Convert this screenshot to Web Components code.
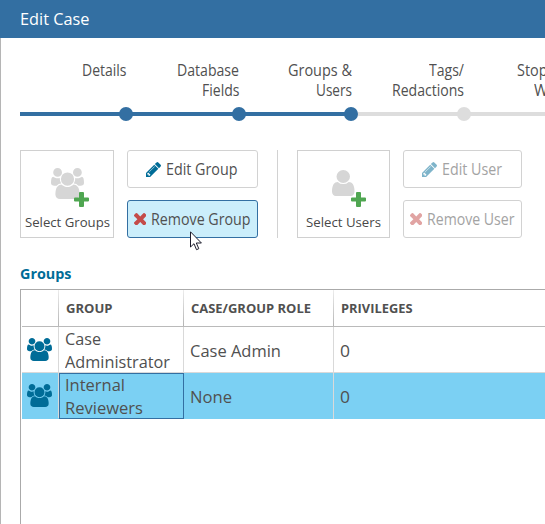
<!DOCTYPE html>
<html lang="en"><head><meta charset="utf-8"><title>Edit Case</title>
<style>
html,body{margin:0;height:524px;overflow:hidden;background:#fff}
body{font-family:"Open Sans","Noto Sans",sans-serif;color:#505050}
</style></head><body>
<case-editor></case-editor>
<script>
const make = (name, html, setup) => customElements.define(name, class extends HTMLElement {
  connectedCallback() {
    if (this.shadowRoot) return;
    const root = this.attachShadow({mode: 'open'});
    const t = document.createElement('template');
    t.innerHTML = html;
    root.append(t.content.cloneNode(true));
    if (setup) setup(this, root);
  }
});

const icons = {
  users: ['0 0 1920 1792', 'M593 896q-162 5-265 128h-134q-82 0-138-40.500t-56-118.500q0-353 124-353 6 0 43.500 21t97.500 42.500 119 21.500q67 0 133-23-5 37-5 66 0 139 81 256zM1664 1533q0 120-73 189.500t-194 69.500h-874q-121 0-194-69.500t-73-189.500q0-53 3.500-103.500t14-109 26.500-108.500 43-97.500 62-81 85.500-53.500 111.500-20q10 0 43 21.500t73 48 107 48 135 21.500 135-21.500 107-48 73-48 43-21.500q61 0 111.500 20t85.500 53.500 62 81 43 97.500 26.500 108.500 14 109 3.500 103.500zM640 256q0 106-75 181t-181 75-181-75-75-181 75-181 181-75 181 75 75 181zM1344 640q0 159-112.500 271.500t-271.500 112.500-271.500-112.500-112.500-271.500 112.500-271.500 271.500-112.500 271.500 112.500 112.500 271.500zM1920 865q0 78-56 118.500t-138 40.500h-134q-103-123-265-128 81-117 81-256 0-29-5-66 66 23 133 23 59 0 119-21.500t97.500-42.500 43.500-21q124 0 124 353zM1792 256q0 106-75 181t-181 75-181-75-75-181 75-181 181-75 181 75 75 181z'],
  user: ['256 128 1280 1536', 'M1536 1399q0 109-62.500 187t-150.500 78h-854q-88 0-150.500-78t-62.500-187q0-85 8.500-160.500t31.500-152 58.500-131 94-89 134.500-34.500q131 128 313 128t313-128q76 0 134.500 34.500t94 89 58.500 131 31.500 152 8.500 160.500zM1280 512q0 159-112.500 271.500t-271.500 112.500-271.500-112.500-112.500-271.500 112.500-271.500 271.500-112.500 271.500 112.500 112.500 271.500z'],
  pencil: ['128 149 1515 1515', 'M491 1536l91-91-235-235-91 91v107h128v128h107zM1014 608q0-22-22-22-10 0-17 7l-542 542q-7 7-7 17 0 22 22 22 10 0 17-7l542-542q7-7 7-17zM960 416l416 416-832 832h-416v-416zM1643 512q0 53-37 90l-166 166-416-416 166-165q36-38 90-38 53 0 91 38l235 234q37 39 37 91z'],
  cross: ['302 366 1188 1188', 'M1490 1322q0 40-28 68l-136 136q-28 28-68 28t-68-28l-294-294-294 294q-28 28-68 28t-68-28l-136-136q-28-28-28-68t28-68l294-294-294-294q-28-28-28-68t28-68l136-136q28-28 68-28t68 28l294 294 294-294q28-28 68-28t68 28l136 136q28 28 28 68t-28 68l-294 294 294 294q28 28 28 68z'],
  plus: ['0 0 15 15', 'M6 0h3q1 0 1 1v4.500h4q1 0 1 1v2q0 1-1 1h-4v4.500q0 1-1 1h-3q-1 0-1-1v-4.500h-4q-1 0-1-1v-2q0-1 1-1h4v-4.500q0-1 1-1z']
};

// One line of text, condensed or widened to take up the width given in "w".
make('fit-text', `<style>:host{display:block;white-space:nowrap}span{display:inline-block;transform-origin:0 50%}</style><span><slot></slot></span>`, (el, root) => {
  const w = parseFloat(el.getAttribute('w')), span = root.querySelector('span');
  el.style.width = w + 'px';
  span.style.transform = `scaleX(${(w / span.getBoundingClientRect().width).toFixed(4)})`;
});

make('ui-icon', `<style>:host{display:block;flex:none;line-height:0}svg{display:block;width:100%;height:100%}</style><svg preserveAspectRatio="none"><path fill="currentColor"/></svg>`, (el, root) => {
  const [box, d] = icons[el.getAttribute('name')];
  root.querySelector('svg').setAttribute('viewBox', box);
  root.querySelector('path').setAttribute('d', d);
});

make('title-bar', `<style>:host{display:block;height:38px;box-sizing:border-box;padding-left:20px;background:#336fa2;color:#fff;font-size:16.500px;line-height:38px}</style><slot></slot>`);

make('wizard-step', `<style>
:host{display:flex;flex-direction:column;flex:none;width:112.670px;height:62px}
.label{height:48px;font-size:15.500px;line-height:20px;display:flex;flex-direction:column;align-items:flex-end;margin-right:-.500px;padding-top:.500px;box-sizing:border-box}
:host([cut]) .label{align-items:flex-start;padding-left:53px}
.mark{height:14px;display:grid;grid-template-columns:1fr;align-items:center}
.mark i{grid-area:1/1;height:4px;background:#336fa2;margin-right:-1px}
.mark b{grid-area:1/1;justify-self:end;width:14px;height:14px;border-radius:50%;background:#336fa2;margin-right:-7px;z-index:1}
:host([first]) .mark i{margin-left:6.700px}
:host([todo]) i,:host([todo]) b{background:#ddd}
:host([cut]) b{visibility:hidden}
</style><div class="label"><slot></slot></div><div class="mark"><i></i><b></b></div>`);

make('wizard-steps', `<style>:host{display:flex;padding:21px 0 0 13.300px;height:62px;overflow:hidden}</style><slot></slot>`);

make('pick-tile', `<style>
:host{display:flex;flex-direction:column;align-items:center;box-sizing:border-box;width:94px;height:88px;border:1px solid #d0d0d0;font-size:13px;line-height:20px;color:#484848}
.art{height:61px;position:relative;display:flex;align-items:flex-start;justify-content:center;width:100%}
.main{color:#d6d6d6;width:33px;height:31px;margin-top:16.500px}
:host([kind=user]) .main{width:22.500px;height:26px;margin-top:19px}
.plus{position:absolute;left:53px;top:41px;width:15px;height:15px;color:#4fa651}
</style><div class="art"></div><slot></slot>`, (el, root) => {
  const icon = document.createElement('ui-icon');
  icon.className = 'main';
  icon.setAttribute('name', el.getAttribute('kind'));
  const plus = document.createElement('ui-icon');
  plus.className = 'plus';
  plus.setAttribute('name', 'plus');
  root.querySelector('.art').append(icon, plus);
});

make('action-button', `<style>
:host{display:flex;align-items:center;box-sizing:border-box;width:131px;height:38px;border:1px solid #d2d2d2;border-radius:3px;font-size:15.500px;line-height:36px;background:#fff}
:host([active]){background:#cbeefb;border-color:#336fa2}
:host([disabled]){color:#a3a3a3}
</style><slot></slot>`);

make('mouse-pointer', `<style>:host{position:absolute;left:190px;top:231px;width:13px;height:20px}svg{display:block}</style>
<svg width="13" height="20" viewBox="0 0 13 20"><path d="M.5.800v15.200l3.500-3.300 2.500 6 2.300-1-2.500-5.700h5.100z" fill="#fff" stroke="#1c1c2c" stroke-width="1"/></svg>`);

make('grid-cell', `<style>
:host{display:flex;flex-direction:column;justify-content:center;box-sizing:border-box;height:46px;border-right:1px solid #d9d9d9;padding-left:6px;font-size:16.500px;line-height:23px}
:host([last]){border-right:0}
:host([head]){height:36px;font-size:12.500px;font-weight:700;line-height:37px;border-image:linear-gradient(#eee,#b3b3b3) 1;padding-left:7px}
:host([pic]){padding-left:5px;color:#006c97;height:45px}
:host([focus]){outline:1px solid #336fa2;outline-offset:-1px;border-right-color:#336fa2}
</style><slot></slot>`);
make('grid-row', `<style>
:host{display:grid;grid-template-columns:37px 125px 150px 1fr;box-sizing:border-box;height:46px;border-bottom:1px solid #d9d9d9}
:host([head]){height:37px;border-color:#bababa}
:host([selected]){background:#7bd0f3;border:0}
</style><slot></slot>`);
make('data-grid', `<style>:host{display:block;box-sizing:border-box;margin-left:20px;height:235px;border:solid #aaa;border-width:1px 0 0 1px;padding-left:1px}</style><slot></slot>`);

make('case-editor', `<style>
:host{display:block;position:relative;width:545px;height:524px;overflow:hidden}
main{height:486px;border-left:1px solid #b5b5b5;box-sizing:border-box}
.body{margin-left:-1px}
.tools{display:flex;padding:29px 0 0 20px}
.stack{display:flex;flex-direction:column;gap:12px;margin-left:13px}
.sep{width:1px;height:88px;background:#d2d2d2;margin:0 19px}
.users{width:93px}
.narrow{width:119px}
h2{margin:0;height:51px;box-sizing:border-box;padding:25px 0 0 20px;font-size:15px;line-height:20px;font-weight:700;color:#006c97}
.p{width:15px;height:15px;color:#006c97;margin:0 4.500px 0 18px}
.x{width:12.500px;height:12.500px;color:#c44b49;margin:0 5px 0 5.500px}
.dim{opacity:.5}
.g{width:25px;height:23px}
</style>
<title-bar><fit-text w="69.500">Edit Case</fit-text></title-bar>
<main><div class="body">
<wizard-steps>
<wizard-step first><fit-text w="44.500">Details</fit-text></wizard-step>
<wizard-step><fit-text w="62">Database</fit-text><fit-text w="37.500">Fields</fit-text></wizard-step>
<wizard-step><fit-text w="64">Groups &amp;</fit-text><fit-text w="36">Users</fit-text></wizard-step>
<wizard-step todo><fit-text w="35">Tags/</fit-text><fit-text w="72">Redactions</fit-text></wizard-step>
<wizard-step todo cut><fit-text w="30.500">Stop</fit-text><fit-text w="14" style="padding-left:17px">W</fit-text></wizard-step>
</wizard-steps>
<div class="tools">
<pick-tile kind="users"><fit-text w="85">Select Groups</fit-text></pick-tile>
<div class="stack">
<action-button><ui-icon class="p" name="pencil"></ui-icon><fit-text w="71.500">Edit Group</fit-text></action-button>
<action-button active><ui-icon class="x" name="cross"></ui-icon><fit-text w="99.500">Remove Group</fit-text></action-button>
</div>
<div class="sep"></div>
<pick-tile kind="user" class="users"><fit-text w="75">Select Users</fit-text></pick-tile>
<div class="stack">
<action-button disabled class="narrow"><ui-icon class="p dim" name="pencil"></ui-icon><fit-text w="60">Edit User</fit-text></action-button>
<action-button disabled class="narrow"><ui-icon class="x dim" name="cross"></ui-icon><fit-text w="87.500">Remove User</fit-text></action-button>
</div>
</div>
<h2><fit-text w="51.500">Groups</fit-text></h2>
<data-grid>
<grid-row head><grid-cell head></grid-cell><grid-cell head><fit-text w="46.500">GROUP</fit-text></grid-cell><grid-cell head><fit-text w="120">CASE/GROUP ROLE</fit-text></grid-cell><grid-cell head last><fit-text w="71.500">PRIVILEGES</fit-text></grid-cell></grid-row>
<grid-row><grid-cell pic><ui-icon class="g" name="users"></ui-icon></grid-cell><grid-cell><fit-text w="36">Case</fit-text><fit-text w="105">Administrator</fit-text></grid-cell><grid-cell><fit-text w="91">Case Admin</fit-text></grid-cell><grid-cell last><fit-text w="10">0</fit-text></grid-cell></grid-row>
<grid-row selected><grid-cell pic><ui-icon class="g" name="users"></ui-icon></grid-cell><grid-cell focus><fit-text w="60">Internal</fit-text><fit-text w="78">Reviewers</fit-text></grid-cell><grid-cell><fit-text w="42">None</fit-text></grid-cell><grid-cell last><fit-text w="10">0</fit-text></grid-cell></grid-row>
</data-grid>
</div></main>
<mouse-pointer></mouse-pointer>`);
</script></body></html>
